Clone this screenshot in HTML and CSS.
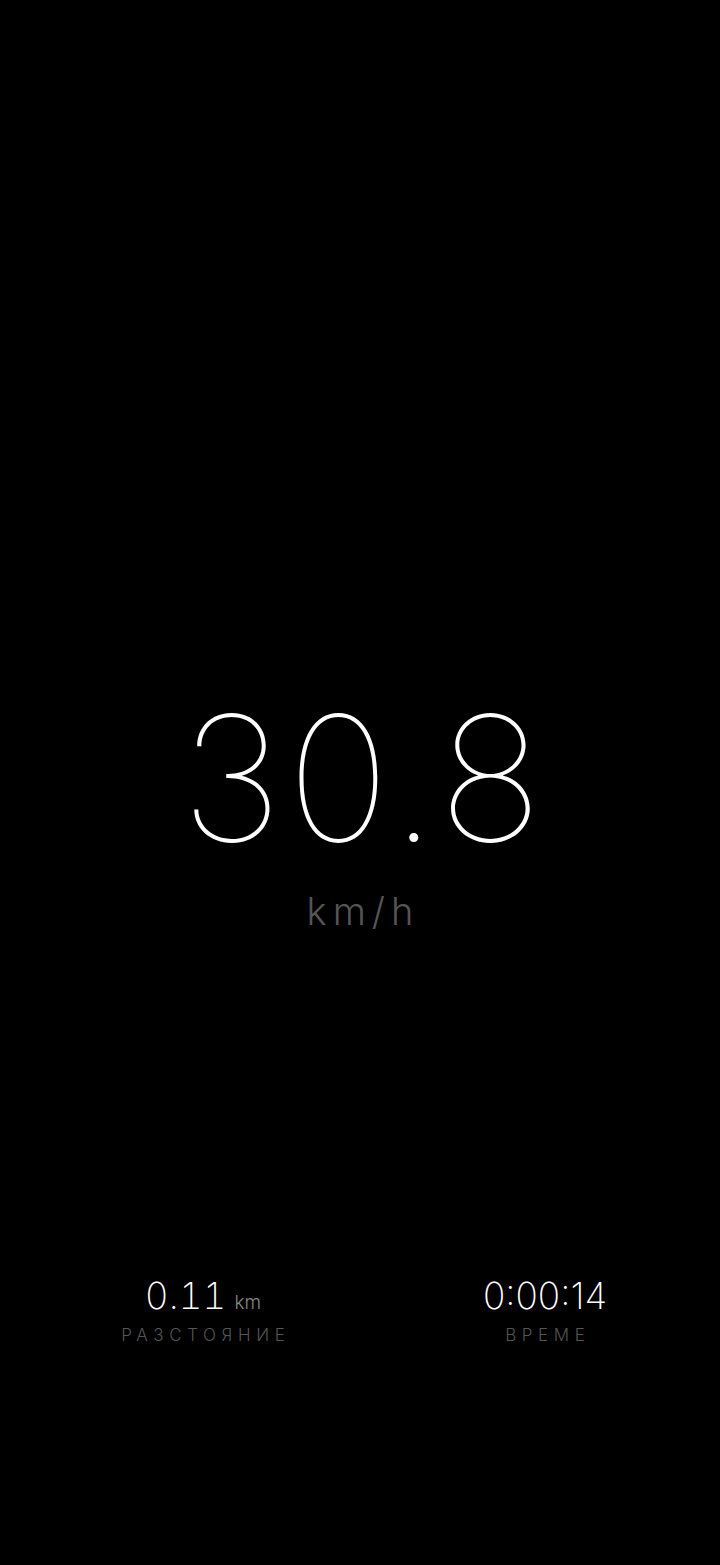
FILE: index.html
```html
<!DOCTYPE html>
<html>
<head>
<meta charset="utf-8">
<link rel="stylesheet" href="styles.css">
</head>
<body>
<div class="screen">
  <div class="speed-block">
    <div class="speed">30.8</div>
    <div class="unit">km/h</div>
  </div>
  <div class="stats">
    <div class="stat stat-left">
      <div class="value value-tab">0.11<span class="small-unit">km</span></div>
      <div class="label">РАЗСТОЯНИЕ</div>
    </div>
    <div class="stat stat-right">
      <div class="value">0:00:14</div>
      <div class="label">ВРЕМЕ</div>
    </div>
  </div>
</div>
</body>
</html>
```
FILE: styles.css
```css
html, body {
  margin: 0;
  padding: 0;
  background: #000;
}
.screen {
  width: 720px;
  height: 1565px;
  background: #000;
  color: #fff;
  font-family: Inter, "Noto Sans", sans-serif;
  display: flex;
  flex-direction: column;
  align-items: center;
}
.speed-block {
  margin-top: 678px;
  display: flex;
  flex-direction: column;
  align-items: center;
}
.speed {
  font-size: 174px;
  font-weight: 100;
  line-height: 200px;
  letter-spacing: 5px;
  padding-left: 8px;
}
.unit {
  margin-top: 10px;
  font-size: 38px;
  font-weight: 300;
  color: #555;
  letter-spacing: 6px;
  line-height: 46px;
  padding-left: 6px;
}
.stats {
  margin-top: 340px;
  width: 720px;
  display: flex;
}
.stat {
  display: flex;
  flex-direction: column;
  align-items: center;
}
.stat-left {
  width: 406px;
}
.stat-right {
  width: 278px;
}
.value {
  font-size: 37px;
  font-weight: 200;
  line-height: 44px;
  height: 44px;
}
.value-tab {
  font-variant-numeric: tabular-nums;
}
.small-unit {
  font-size: 19px;
  line-height: 19px;
  color: #888;
  margin-left: 8px;
  font-weight: 300;
}
.label {
  margin-top: 6px;
  font-size: 17px;
  font-weight: 300;
  color: #555;
  letter-spacing: 5.6px;
  line-height: 22px;
  padding-left: 5.6px;
}
```
